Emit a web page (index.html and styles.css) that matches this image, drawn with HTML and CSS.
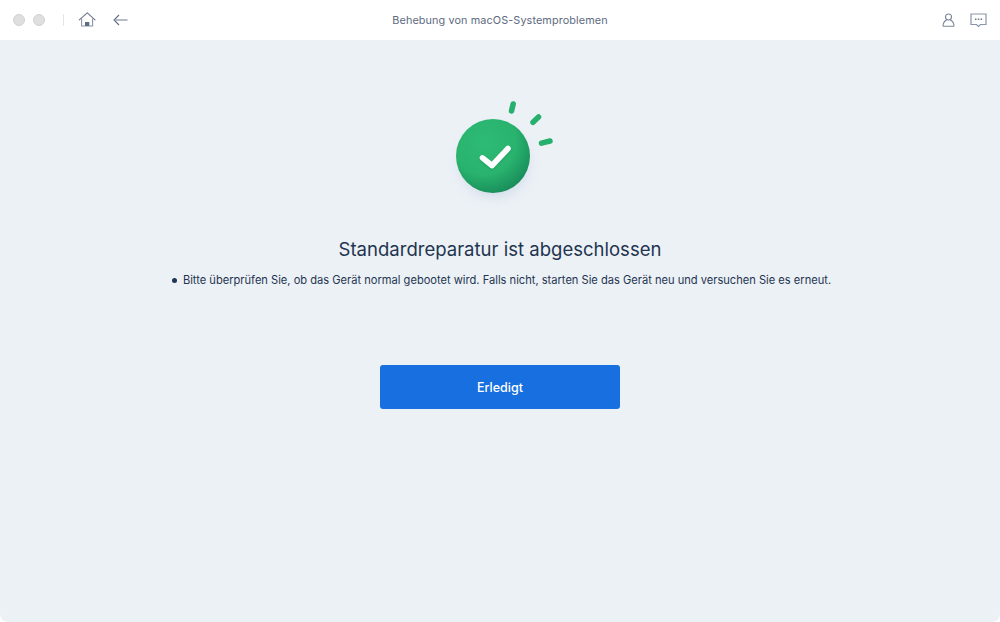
FILE: index.html
```html
<!DOCTYPE html>
<html lang="de">
<head>
  <meta charset="UTF-8" />
  <meta name="viewport" content="width=device-width, initial-scale=1.0"/>
  <title>Behebung von macOS-Systemproblemen</title>
  <link rel="stylesheet" href="styles.css">
</head>
<body>

  <header class="topbar">
    <div class="top-left">
      <span class="light"></span>
      <span class="light"></span>
      <span class="divider"></span>
      <svg class="icon-home" width="18" height="16" viewBox="0 0 18 16" fill="none">
        <path d="M1.300 7.800 9.300 0.800 17 7.800" stroke="#6a768a" stroke-width="1.100" stroke-linejoin="round" stroke-linecap="round"/>
        <path d="M3.600 6.500V14H14.600V6.500" stroke="#8a94a6" stroke-width="1.100"/>
        <rect x="7" y="10" width="4.300" height="4" fill="#5f6b80"/>
      </svg>
      <svg class="icon-back" width="15" height="12" viewBox="0 0 15 12" fill="none">
        <path d="M6 1 1 6l5 5" stroke="#5f6b80" stroke-width="1.100"/>
        <path d="M1.500 6H14.500" stroke="#98a1b0" stroke-width="1.400"/>
      </svg>
    </div>
    <div class="top-title">Behebung von macOS-Systemproblemen</div>
    <div class="top-right">
      <svg class="icon-user" width="13" height="14" viewBox="0 0 13 14" fill="none">
        <circle cx="6.500" cy="4" r="3" stroke="#7b8698" stroke-width="1.100"/>
        <path d="M1 13.300c0-3.400 2-5.600 3.700-6.300M12 13.300c0-3.400-2-5.600-3.700-6.300M1 13.300H12" stroke="#7b8698" stroke-width="1.100"/>
      </svg>
      <svg width="17" height="15" viewBox="0 0 17 15" fill="none">
        <path d="M1 1H16V11.500H10.500L8.500 13.500 6.500 11.500H1Z" stroke="#8a94a6" stroke-width="1.200"/>
        <path d="M5 6.300H6.500M7.800 6.300H9.300M10.600 6.300H12.100" stroke="#6b768a" stroke-width="1.500"/>
      </svg>
    </div>
  </header>

  <main class="content">
    <svg class="success-icon" width="130" height="120" viewBox="0 0 130 120" fill="none">
      <defs>
        <radialGradient id="ball" cx="0.380" cy="0.320" r="0.720">
          <stop offset="0" stop-color="#2dbb74"/>
          <stop offset="0.600" stop-color="#29b36e"/>
          <stop offset="1" stop-color="#188c5a"/>
        </radialGradient>
        <filter id="glow" x="-40%" y="-40%" width="180%" height="180%">
          <feGaussianBlur stdDeviation="7"/>
        </filter>
        <filter id="tickshadow" x="-30%" y="-30%" width="160%" height="160%">
          <feDropShadow dx="0" dy="1" stdDeviation="0.800" flood-color="#14784c" flood-opacity="0.400"/>
        </filter>
      </defs>
      <circle cx="54" cy="73" r="33" fill="#b4c3da" opacity="0.550" filter="url(#glow)"/>
      <circle cx="53" cy="66" r="37" fill="url(#ball)"/>
      <path d="M42.500 67.800 52 75.500 68 58.500" stroke="#fff" stroke-width="5.500" stroke-linecap="round" stroke-linejoin="round" filter="url(#tickshadow)"/>
      <path d="M73.200 14 71.500 21" stroke="#27b06d" stroke-width="5.500" stroke-linecap="round"/>
      <path d="M98.500 27 93 32.300" stroke="#27b06d" stroke-width="5.500" stroke-linecap="round"/>
      <path d="M110 51 101.500 53.200" stroke="#27b06d" stroke-width="5.500" stroke-linecap="round"/>
    </svg>

    <h1>Standardreparatur ist abgeschlossen</h1>
    <p class="note"><span class="dot"></span>Bitte überprüfen Sie, ob das Gerät normal gebootet wird. Falls nicht, starten Sie das Gerät neu und versuchen Sie es erneut.</p>
    <button class="btn-done">Erledigt</button>
  </main>

</body>
</html>
```

FILE: styles.css
```css
* {
  box-sizing: border-box;
}

html, body {
  height: 100%;
}

body {
  margin: 0;
  background: #fff;
  font-family: Inter, 'Liberation Sans', sans-serif;
  display: flex;
  flex-direction: column;
  overflow: hidden;
}

.topbar {
  height: 40px;
  flex: none;
  display: grid;
  grid-template-columns: 1fr auto 1fr;
  align-items: center;
  padding: 0 13px;
}

.top-left {
  display: flex;
  align-items: center;
}

.light {
  width: 12px;
  height: 12px;
  border-radius: 50%;
  background: #dfdfdf;
  border: 1px solid #d2d2d2;
  margin-right: 8px;
}

.divider {
  width: 1px;
  height: 12px;
  background: #e4e4e4;
  margin: 0 14px 0 10px;
}

.icon-back {
  margin-left: 17px;
}

.top-title {
  text-align: center;
  font-size: 10.850px;
  color: #5d6a80;
  letter-spacing: 0.1px;
}

.top-right {
  display: flex;
  align-items: center;
  justify-content: flex-end;
  gap: 15px;
}

.content {
  flex: 1;
  background: #ecf1f6;
  border-radius: 0 0 8px 8px;
  display: flex;
  flex-direction: column;
  align-items: center;
  padding-top: 50px;
}

.success-icon {
  display: block;
  margin-left: 10px;
}

h1 {
  margin: 28px 0 0;
  font-size: 18.550px;
  line-height: 22px;
  font-weight: 400;
  color: #1f3550;
}

.note {
  margin: 13px 0 0 3px;
  font-size: 11.120px;
  line-height: 14px;
  color: #1f3550;
  display: flex;
  align-items: center;
}

.dot {
  width: 5px;
  height: 5px;
  border-radius: 50%;
  background: #1f3550;
  margin-right: 6px;
}

.btn-done {
  margin-top: 78px;
  width: 240px;
  height: 44px;
  border: none;
  border-radius: 3px;
  background: #186fdf;
  color: #fff;
  font-family: inherit;
  font-size: 12.500px;
  font-weight: 500;
  cursor: pointer;
}
```
